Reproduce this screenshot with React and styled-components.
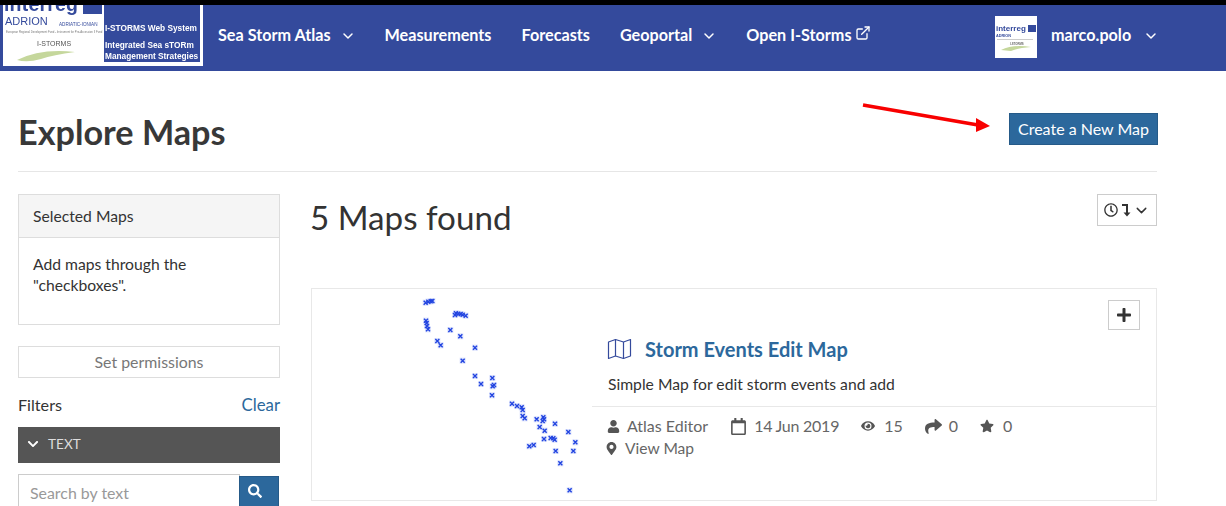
import React from 'react';
import styled, { createGlobalStyle } from 'styled-components';
import { FaUser, FaEye, FaShare, FaStar, FaMapMarkerAlt, FaPlus, FaSearch, FaChevronDown, FaRegCalendar, FaRegClock } from 'react-icons/fa';
import { FiChevronDown, FiExternalLink } from 'react-icons/fi';

const Global = createGlobalStyle`
  html, body { margin: 0; padding: 0; background: #fff; }
  body { width: 1226px; height: 506px; overflow: hidden; font-family: Lato, "Noto Sans", sans-serif; color: #333; font-size: 16px; }
  * { box-sizing: border-box; }
`;

const Page = styled.div`
  position: relative;
  width: 1226px;
  height: 506px;
  overflow: hidden;
`;
const Nav = styled.header`
  display: flex;
  align-items: flex-start;
  height: 71px;
  background: #344a9c;
  border-top: 5px solid #000;
  padding-left: 3px;
`;
const NavItems = styled.nav`
  display: flex;
  align-items: center;
  height: 58px;
  margin-left: 15px;
  gap: 30px;
  flex: 1;
`;
const NavItem = styled.a`
  display: flex;
  align-items: center;
  color: #fff;
  font-weight: 700;
  font-size: 16.2px;
  white-space: nowrap;
  svg { flex: none; }
`;
const Caret = styled(FiChevronDown)`
  margin: 4px -1px 0 9px;
  width: 16px;
  height: 16px;
  stroke-width: 2.2;
`;
const UserMenu = styled.div`
  display: flex;
  align-items: center;
  height: 58px;
  width: 231px;
  color: #fff;
  font-weight: 700;
  font-size: 16.2px;
`;
const UserName = styled.span`
  margin-left: 14px;
`;
const UserCaret = styled(Caret)`
  margin: 4px 0 0 12px;
`;
const AvatarWrap = styled.span`
  display: flex;
  margin-top: 6px;
  filter: blur(0.3px);
`;
const LogoWrap = styled.span`
  display: flex;
  flex: none;
  filter: blur(0.3px);
`;

const Main = styled.main`
  padding: 0 69px 0 18px;
`;
const PageHeader = styled.div`
  display: flex;
  align-items: flex-start;
  justify-content: space-between;
  height: 101px;
  border-bottom: 1px solid #e6e6e6;
`;
const Title = styled.h1`
  margin: 40px 0 0;
  font-size: 34.2px;
  line-height: 42px;
  font-weight: 700;
  color: #383838;
`;
const PrimaryButton = styled.button`
  margin: 42px -1px 0 0;
  width: 149px;
  height: 32px;
  background: #2c689c;
  border: 1px solid #255a88;
  color: #fff;
  font: 400 16px Lato, sans-serif;
  padding: 0 0 2px;
`;
const Columns = styled.div`
  display: flex;
  gap: 31px;
  margin-top: 22px;
`;
const Sidebar = styled.aside`
  width: 262px;
  flex: none;
`;
const Panel = styled.section`
  border: 1px solid #ddd;
  height: 131px;
`;
const PanelHead = styled.div`
  height: 43px;
  background: #f5f5f5;
  border-bottom: 1px solid #ddd;
  padding: 0 14px;
  font-size: 15.7px;
  line-height: 43px;
`;
const PanelBody = styled.div`
  padding: 16px 14px;
  font-size: 15.7px;
  line-height: 21px;
`;
const GhostButton = styled.button`
  display: block;
  width: 100%;
  height: 32px;
  margin-top: 21px;
  padding: 0 0 2px;
  background: #fff;
  border: 1px solid #ddd;
  color: #777;
  font: 400 15.9px Lato, sans-serif;
`;
const FilterHead = styled.div`
  display: flex;
  justify-content: space-between;
  align-items: center;
  height: 22px;
  margin-top: 15px;
  font-size: 16.2px;
`;
const ClearLink = styled.a`
  color: #2c689c;
  font-size: 16.8px;
`;
const FilterBar = styled.div`
  display: flex;
  align-items: center;
  gap: 9px;
  height: 36px;
  margin-top: 12px;
  padding: 0 0 3px 9px;
  background: #555;
  color: #ddd;
  font-size: 13.6px;
  svg { color: #fff; width: 12px; height: 12px; }
`;
const SearchRow = styled.div`
  display: flex;
  margin-top: 11px;
  height: 40px;
`;
const SearchInput = styled.input`
  width: 222px;
  height: 40px;
  border: 1px solid #ccc;
  padding: 0 11px 4px;
  font: 400 15.9px Lato, sans-serif;
  &::placeholder { color: #999; opacity: 1; }
`;
const SearchButton = styled.button`
  width: 40px;
  height: 40px;
  margin: 2px 0 0 -1px;
  background: #2c689c;
  border: 1px solid #255a88;
  color: #fff;
  padding: 0 8px 8px 0;
  svg { width: 14px; height: 14px; }
`;
const Content = styled.div`
  flex: 1;
  min-width: 0;
`;
const ResultsHead = styled.div`
  display: flex;
  justify-content: space-between;
  align-items: flex-start;
  height: 94px;
`;
const ResultsTitle = styled.h2`
  margin: 3px 0 0 -1px;
  font-size: 33.2px;
  line-height: 40px;
  font-weight: 400;
  color: #333;
`;
const SortButton = styled.button`
  display: flex;
  align-items: center;
  justify-content: center;
  width: 60px;
  height: 32px;
  background: #fff;
  border: 1px solid #ccc;
  color: #333;
  padding: 0;
`;
const Card = styled.article`
  position: relative;
  display: flex;
  height: 213px;
  border: 1px solid #e8e8e8;
`;
const Thumb = styled.svg`
  flex: none;
  width: 280px;
  height: 211px;
  filter: blur(0.3px);
`;
const CardBody = styled.div`
  flex: 1;
  min-width: 0;
`;
const CardTitle = styled.h3`
  display: flex;
  align-items: center;
  gap: 13px;
  margin: 46px 0 0 15px;
  font-size: 20px;
  line-height: 28px;
  font-weight: 700;
  color: #2c689c;
`;
const CardText = styled.p`
  margin: 10px 0 0 16px;
  height: 33px;
  font-size: 15.7px;
  line-height: 22px;
`;
const Meta = styled.div`
  border-top: 1px solid #e8e8e8;
  padding: 8px 0 0 15px;
  color: #666;
  font-size: 16px;
  line-height: 22px;
`;
const MetaRow = styled.div`
  display: flex;
  align-items: center;
  gap: 22px;
`;
const LinkRow = styled(MetaRow)`
  margin-left: -2px;
  font-size: 15.6px;
`;
const MetaItem = styled.span`
  display: inline-flex;
  align-items: center;
  gap: ${p => p.$gap || 8}px;
  letter-spacing: ${p => p.$tight || 0}px;
  svg { color: #555; flex: none; }
`;
const AddButton = styled.button`
  position: absolute;
  top: 11px;
  right: 16px;
  display: flex;
  align-items: center;
  justify-content: center;
  width: 32px;
  height: 30px;
  background: #fff;
  border: 1px solid #ccc;
  color: #333;
  padding: 0;
`;
const Arrow = styled.svg`
  position: absolute;
  left: 860px;
  top: 98px;
  filter: blur(0.4px);
`;

const pts = [[77,38],[85,35],[92,34],[97,33],[165,75],[168,70],[175,71],[182,72],[188,74],[197,77],[78,92],[80,99],[81,108],[84,118],[151,120],[181,139],[112,153],[122,166],[225,173],[188,212],[225,258],[277,264],[243,282],[282,285],[278,289],[276,316],[336,341],[351,348],[365,352],[368,360],[368,378],[374,385],[410,388],[430,382],[432,388],[428,393],[465,401],[419,411],[434,422],[505,426],[432,447],[452,444],[460,445],[464,449],[526,457],[401,465],[388,469],[467,483],[520,483],[481,520],[509,601]];

const Logo = () => (
  <svg width="200" height="61" viewBox="0 0 200 61">
    <rect width="200" height="61" fill="#fff" />
    <rect x="101" y="0" width="96" height="57" fill="#344a9c" />
    <text x="1" y="6" fontFamily="Liberation Sans" fontWeight="700" fontSize="19.5" fill="#344a9c" letterSpacing="0.2">interreg</text>
    <rect x="80" y="0" width="19" height="9" fill="#344a9c" />
    <text x="2" y="20" fontFamily="Liberation Sans" fontSize="11" fill="#344a9c">ADRION</text>
    <text x="56" y="21" fontFamily="Liberation Sans" fontSize="4.6" fill="#344a9c">ADRIATIC-IONIAN</text>
    <text x="3" y="27.5" fontFamily="Liberation Sans" fontSize="2.8" fill="#777">European Regional Development Fund - Instrument for Pre-Accession II Fund</text>
    <text x="34" y="41" fontFamily="Liberation Sans" fontSize="7" fill="#555">I-STORMS</text>
    <path d="M14 55 Q38 43 72 47 Q50 50 38 54 Q24 58 14 55Z" fill="#c5d79c" />
    <text x="102" y="26" fontFamily="Liberation Sans" fontWeight="700" fontSize="8.3" fill="#fff">I-STORMS Web System</text>
    <text x="102" y="43" fontFamily="Liberation Sans" fontWeight="700" fontSize="8.3" fill="#fff">Integrated Sea sTORm</text>
    <text x="102" y="54" fontFamily="Liberation Sans" fontWeight="700" fontSize="8.3" fill="#fff">Management Strategies</text>
  </svg>
);

const Avatar = () => (
  <svg width="42" height="42" viewBox="0 0 42 42" style={{ flex: 'none' }}>
    <rect width="42" height="42" fill="#fff" />
    <text x="1" y="15" fontFamily="Liberation Sans" fontWeight="700" fontSize="8" fill="#344a9c">interreg</text>
    <rect x="33" y="9" width="8" height="7" fill="#344a9c" />
    <text x="1" y="20.5" fontFamily="Liberation Sans" fontSize="3.8" fill="#344a9c">ADRION</text>
    <rect x="2" y="23" width="36" height="1" fill="#ccc" />
    <text x="15" y="29" fontFamily="Liberation Sans" fontSize="2.8" fill="#666">I-STORMS</text>
    <path d="M6 34 Q18 28 36 31 Q22 32 16 35Z" fill="#c5d79c" />
  </svg>
);

const MapIcon = () => (
  <svg width="25" height="22" viewBox="0 0 25 22" fill="none" stroke="#344a9c" strokeWidth="1.2" strokeLinejoin="round" style={{ flex: 'none' }}>
    <path d="M1.5 4 L8.5 1.5 L16.5 4 L23.5 1.5 V18 L16.5 20.5 L8.5 18 L1.5 20.5 Z" />
    <path d="M8.5 1.5 V18 M16.5 4 V20.5" />
  </svg>
);

const SortArrow = () => (
  <svg width="10" height="14" viewBox="0 0 10 14" style={{ margin: '0 2px 0 3px', flex: 'none' }}>
    <path d="M1 2 H6 V10" fill="none" stroke="#333" strokeWidth="2" />
    <path d="M2.5 9.5 H9.5 L6 13.5 Z" fill="#333" />
  </svg>
);

export default function App() {
  return (
    <Page>
      <Global />
      <Nav>
        <LogoWrap><Logo /></LogoWrap>
        <NavItems>
          <NavItem>Sea Storm Atlas<Caret /></NavItem>
          <NavItem>Measurements</NavItem>
          <NavItem>Forecasts</NavItem>
          <NavItem>Geoportal<Caret /></NavItem>
          <NavItem>Open I-Storms<FiExternalLink size={16} style={{ marginLeft: 3, marginTop: -3 }} /></NavItem>
        </NavItems>
        <UserMenu>
          <AvatarWrap><Avatar /></AvatarWrap>
          <UserName>marco.polo</UserName>
          <UserCaret />
        </UserMenu>
      </Nav>
      <Main>
        <PageHeader>
          <Title>Explore Maps</Title>
          <PrimaryButton>Create a New Map</PrimaryButton>
        </PageHeader>
        <Columns>
          <Sidebar>
            <Panel>
              <PanelHead>Selected Maps</PanelHead>
              <PanelBody>Add maps through the "checkboxes".</PanelBody>
            </Panel>
            <GhostButton>Set permissions</GhostButton>
            <FilterHead><span>Filters</span><ClearLink>Clear</ClearLink></FilterHead>
            <FilterBar><FaChevronDown />TEXT</FilterBar>
            <SearchRow>
              <SearchInput placeholder="Search by text" />
              <SearchButton><FaSearch /></SearchButton>
            </SearchRow>
          </Sidebar>
          <Content>
            <ResultsHead>
              <ResultsTitle>5 Maps found</ResultsTitle>
              <SortButton>
                <FaRegClock size={14} />
                <SortArrow />
                <FiChevronDown size={17} />
              </SortButton>
            </ResultsHead>
            <Card>
              <Thumb viewBox="0 0 280 211">
                {pts.map(([x, y], i) => {
                  const px = 400 + x / 3 - 312;
                  const py = 290 + y / 3 - 289;
                  return <rect key={i} x={px - 3} y={py - 3} width="6" height="6" fill="#dbe2fc" />;
                })}
                {pts.map(([x, y], i) => {
                  const px = 400 + x / 3 - 312;
                  const py = 290 + y / 3 - 289;
                  return (
                    <path key={i} d={`M${px - 2} ${py - 2}L${px + 2} ${py + 2}M${px + 2} ${py - 2}L${px - 2} ${py + 2}`} stroke="#2244e0" strokeWidth="1.4" />
                  );
                })}
              </Thumb>
              <CardBody>
                <CardTitle><MapIcon />Storm Events Edit Map</CardTitle>
                <CardText>Simple Map for edit storm events and add</CardText>
                <Meta>
                  <MetaRow>
                    <MetaItem $gap={7}><FaUser size={13} />Atlas Editor</MetaItem>
                    <MetaItem $gap={7} $tight={-0.25}><FaRegCalendar size={17} />14 Jun 2019</MetaItem>
                    <MetaItem $gap={9}><FaEye size={14} />15</MetaItem>
                    <MetaItem $gap={7}><FaShare size={17} />0</MetaItem>
                    <MetaItem $gap={9}><FaStar size={14} />0</MetaItem>
                  </MetaRow>
                  <LinkRow>
                    <MetaItem $gap={7}><FaMapMarkerAlt size={13} />View Map</MetaItem>
                  </LinkRow>
                </Meta>
              </CardBody>
              <AddButton><FaPlus size={16} /></AddButton>
            </Card>
          </Content>
        </Columns>
      </Main>
      <Arrow width="140" height="40" viewBox="0 0 140 40">
        <line x1="3" y1="7" x2="118" y2="27" stroke="#f80000" strokeWidth="3.6" />
        <polygon points="116,20 130,28 116,34" fill="#f80000" />
      </Arrow>
    </Page>
  );
}
